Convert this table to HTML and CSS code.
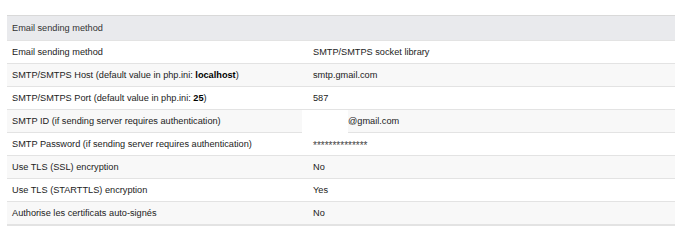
FILE: index.html
```html
<!DOCTYPE html>
<html lang="en">
<head>
    <meta charset="UTF-8" />
    <title>Email sending method</title>
    <link rel="stylesheet" href="styles.css">
</head>
<body>
<div class="page">
    <table class="setup">
        <thead>
            <tr class="title-row">
                <th colspan="2">Email sending method</th>
            </tr>
        </thead>
        <tbody>
            <tr>
                <td class="label">Email sending method</td>
                <td>SMTP/SMTPS socket library</td>
            </tr>
            <tr>
                <td class="label">SMTP/SMTPS Host (default value in php.ini: <b>localhost</b>)</td>
                <td>smtp.gmail.com</td>
            </tr>
            <tr>
                <td class="label">SMTP/SMTPS Port (default value in php.ini: <b>25</b>)</td>
                <td>587</td>
            </tr>
            <tr>
                <td class="label">SMTP ID (if sending server requires authentication)</td>
                <td><span class="redacted"></span>@gmail.com</td>
            </tr>
            <tr>
                <td class="label">SMTP Password (if sending server requires authentication)</td>
                <td><span class="stars">**************</span></td>
            </tr>
            <tr>
                <td class="label">Use TLS (SSL) encryption</td>
                <td>No</td>
            </tr>
            <tr>
                <td class="label">Use TLS (STARTTLS) encryption</td>
                <td>Yes</td>
            </tr>
            <tr>
                <td class="label">Authorise les certificats auto-signés</td>
                <td>No</td>
            </tr>
        </tbody>
    </table>
</div>
</body>
</html>
```

FILE: styles.css
```css
:root {
    --text: #222;
    --head-bg: #e9eaed;
    --row-alt: #f8f8f8;
    --border: #e3e3e3;
}

body {
    margin: 0;
    background: #fff;
    font-family: "Liberation Sans", Arial, sans-serif;
    font-size: 9.2px;
    color: var(--text);
}

.page {
    padding: 15px 15px 0 7px;
}

.setup {
    width: 668px;
    border-collapse: collapse;
    border-bottom: 2px solid var(--border);
}

.setup th,
.setup td {
    padding: 5px 5px 5px 5px;
    line-height: 12px;
    text-align: left;
    font-weight: normal;
    border-top: 1px solid var(--border);
    white-space: nowrap;
}

.title-row th {
    background: var(--head-bg);
    border-top: 1px solid #d9d9d9;
    padding: 6px 5px;
    color: #333;
}

.setup td.label {
    width: 291px;
}

.setup tbody tr:nth-child(even) {
    background: var(--row-alt);
}

.setup b {
    font-weight: bold;
    color: #000;
}

.stars {
    display: inline-block;
    font-size: 10px;
    line-height: 12px;
    position: relative;
    top: 2px;
    color: #444;
}

.redacted {
    display: inline-block;
    width: 46px;
    height: 23px;
    margin: -6px 0 -6px -11px;
    vertical-align: middle;
    background: #fff;
}
```
